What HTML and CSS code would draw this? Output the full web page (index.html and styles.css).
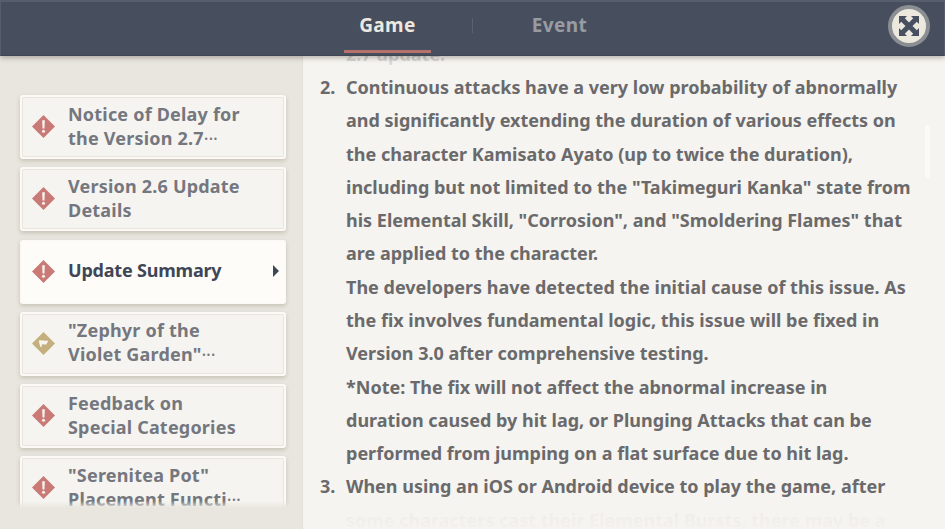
FILE: index.html
```html
<!DOCTYPE html>
<html>

<head>
    <meta charset="UTF-8">
    <title>Notices</title>
    <link rel="stylesheet" href="styles.css">
</head>

<body>
    <div class="topbar">
        <div class="tab tab-on">Game</div>
        <div class="tab-sep"></div>
        <div class="tab">Event</div>
        <div class="close">
            <svg viewBox="0 0 24 24" width="24" height="24">
                <path d="M12 8.5L7.8 4.2L10 2H2V10L4.2 7.8L8.5 12L4.2 16.2L2 14V22H10L7.8 19.8L12 15.5L16.2 19.8L14 22H22V14L19.8 16.2L15.5 12L19.8 7.8L22 10V2H14L16.2 4.2Z" fill="#474f60"/>
            </svg>
        </div>
    </div>
    <div class="main">
        <div class="side">
            <div class="card">
                <svg class="mark" viewBox="0 0 24 24"><path d="M12 0L24 12L12 24L0 12Z" fill="#c97a76"/><path d="M10.6 5.5H13.4L13 14H11Z" fill="#f8f4ee"/><circle cx="12" cy="17" r="1.6" fill="#f8f4ee"/></svg>
                <div class="card-text">Notice of Delay for<br>the Version 2.7<span class="more">···</span></div>
            </div>
            <div class="card">
                <svg class="mark" viewBox="0 0 24 24"><path d="M12 0L24 12L12 24L0 12Z" fill="#c97a76"/><path d="M10.6 5.5H13.4L13 14H11Z" fill="#f8f4ee"/><circle cx="12" cy="17" r="1.6" fill="#f8f4ee"/></svg>
                <div class="card-text">Version 2.6 Update<br>Details</div>
            </div>
            <div class="card card-on">
                <svg class="mark" viewBox="0 0 24 24"><path d="M12 0L24 12L12 24L0 12Z" fill="#c97a76"/><path d="M10.6 5.5H13.4L13 14H11Z" fill="#f8f4ee"/><circle cx="12" cy="17" r="1.6" fill="#f8f4ee"/></svg>
                <div class="card-text">Update Summary</div>
                <div class="arrow"></div>
            </div>
            <div class="card">
                <svg class="mark" viewBox="0 0 24 24"><path d="M12 0L24 12L12 24L0 12Z" fill="#c4b07e"/><path d="M7 9C10 7.8 13 10 17 8.8L15 13C13 13.2 11.5 12.4 10.4 13L9.8 16L8.6 15.4Z" fill="#f8f4ee"/></svg>
                <div class="card-text">"Zephyr of the<br>Violet Garden"<span class="more">···</span></div>
            </div>
            <div class="card">
                <svg class="mark" viewBox="0 0 24 24"><path d="M12 0L24 12L12 24L0 12Z" fill="#c97a76"/><path d="M10.6 5.5H13.4L13 14H11Z" fill="#f8f4ee"/><circle cx="12" cy="17" r="1.6" fill="#f8f4ee"/></svg>
                <div class="card-text">Feedback on<br>Special Categories</div>
            </div>
            <div class="card">
                <svg class="mark" viewBox="0 0 24 24"><path d="M12 0L24 12L12 24L0 12Z" fill="#c97a76"/><path d="M10.6 5.5H13.4L13 14H11Z" fill="#f8f4ee"/><circle cx="12" cy="17" r="1.6" fill="#f8f4ee"/></svg>
                <div class="card-text">"Serenitea Pot"<br>Placement Functi<span class="more">···</span></div>
            </div>
            <div class="side-fade"></div>
        </div>
        <div class="content">
            <div class="notes">
                <div class="line">2.7 update.</div>
                <div class="line"><span class="num">2.</span>Continuous attacks have a very low probability of abnormally</div>
                <div class="line">and significantly extending the duration of various effects on</div>
                <div class="line">the character Kamisato Ayato (up to twice the duration),</div>
                <div class="line">including but not limited to the "Takimeguri Kanka" state from</div>
                <div class="line">his Elemental Skill, "Corrosion", and "Smoldering Flames" that</div>
                <div class="line">are applied to the character.</div>
                <div class="line">The developers have detected the initial cause of this issue. As</div>
                <div class="line">the fix involves fundamental logic, this issue will be fixed in</div>
                <div class="line">Version 3.0 after comprehensive testing.</div>
                <div class="line">*Note: The fix will not affect the abnormal increase in</div>
                <div class="line">duration caused by hit lag, or Plunging Attacks that can be</div>
                <div class="line">performed from jumping on a flat surface due to hit lag.</div>
                <div class="line"><span class="num">3.</span>When using an iOS or Android device to play the game, after</div>
                <div class="line">some characters cast their Elemental Bursts, there may be a</div>
            </div>
            <div class="top-fade"></div>
            <div class="content-fade"></div>
            <div class="thumb"></div>
        </div>
    </div>
</body>

</html>
```

FILE: styles.css
```css
html, body {
    margin: 0;
    height: 100%;
    overflow: hidden;
}

body {
    display: flex;
    flex-direction: column;
    font-family: "Noto Sans", sans-serif;
    font-weight: 700;
    background-color: #f6f4f0;
}

.topbar {
    position: relative;
    z-index: 2;
    box-sizing: border-box;
    height: 56px;
    display: flex;
    align-items: center;
    padding-left: 343px;
    padding-bottom: 6px;
    background-color: #474f5f;
    border: 1px solid #565e6e;
    border-top-width: 2px;
    border-bottom: 1px solid #3e4553;
    box-shadow: 0 2px 5px rgba(60, 55, 45, 0.35);
}

.tab {
    position: relative;
    width: 87px;
    text-align: center;
    font-size: 19px;
    line-height: 43px;
    letter-spacing: 0.4px;
    color: #989ba2;
}

.tab-on {
    color: #ece8df;
}

.tab-on::after {
    content: "";
    position: absolute;
    left: 0;
    right: 0;
    bottom: -6px;
    height: 3px;
    background-color: #b5716b;
}

.tab-sep {
    width: 1px;
    height: 15px;
    margin: 0 43px 0 41px;
    background-color: #596170;
}

.close {
    box-sizing: border-box;
    width: 42px;
    height: 42px;
    margin-left: auto;
    margin-right: 14px;
    display: flex;
    align-items: center;
    justify-content: center;
    border: 4px solid #8b8f93;
    border-radius: 50%;
    background-color: #ece8dd;
}

.main {
    flex: 1;
    display: flex;
    min-height: 0;
}

.side {
    position: relative;
    box-sizing: border-box;
    width: 303px;
    padding: 39px 16px 0 20px;
    display: flex;
    flex-direction: column;
    gap: 8.3px;
    overflow: hidden;
    background-color: #e9e6df;
    border-right: 1px solid #e2dfd7;
}

.card {
    flex: none;
    box-sizing: border-box;
    height: 64px;
    display: flex;
    align-items: center;
    padding: 0 0 1px 10px;
    background-color: #f6f4f0;
    border: 2px solid #fbfaf6;
    border-radius: 3px;
    outline: 1px solid #e9e5db;
    outline-offset: -3px;
    box-shadow: 0 2px 4px rgba(120, 110, 90, 0.3);
}

.card-on {
    background-color: #fdfcf9;
    outline: none;
}

.mark {
    flex: none;
    width: 23px;
    height: 23px;
}

.card-text {
    margin: 0 0 2px 13px;
    font-size: 18px;
    line-height: 24px;
    letter-spacing: 0.2px;
    white-space: nowrap;
    color: #75777f;
}

.card-on .card-text {
    letter-spacing: -0.2px;
    color: #3f4656;
}

.more {
    font-weight: 400;
    letter-spacing: -0.2px;
}

.arrow {
    margin-left: auto;
    margin-right: 5px;
    border-left: 6px solid #3f4656;
    border-top: 6px solid transparent;
    border-bottom: 6px solid transparent;
}

.side-fade {
    position: absolute;
    left: 0;
    right: 0;
    bottom: 0;
    height: 28px;
    background: linear-gradient(to bottom, rgba(233, 230, 223, 0) 0, #e9e6df 7px);
}

.content {
    position: relative;
    flex: 1;
    overflow: hidden;
    background-color: #f6f4f0;
}

.notes {
    margin-top: -18.4px;
    padding-left: 43px;
}

.line {
    position: relative;
    font-size: 18px;
    line-height: 33.3px;
    white-space: nowrap;
    color: #6a6a6c;
}

.num {
    position: absolute;
    left: -26px;
}

.top-fade {
    position: absolute;
    left: 0;
    right: 0;
    top: 0;
    height: 10px;
    background: linear-gradient(to bottom, rgba(246, 244, 240, 0.7), rgba(246, 244, 240, 0.85));
}

.content-fade {
    position: absolute;
    left: 0;
    right: 0;
    bottom: 0;
    height: 32px;
    background: linear-gradient(to bottom, rgba(246, 244, 240, 0.92), rgba(246, 244, 240, 0.98));
}

.thumb {
    position: absolute;
    top: 69px;
    right: 15px;
    width: 5px;
    height: 53px;
    border-radius: 2px;
    background-color: #fbfaf8;
}
```
